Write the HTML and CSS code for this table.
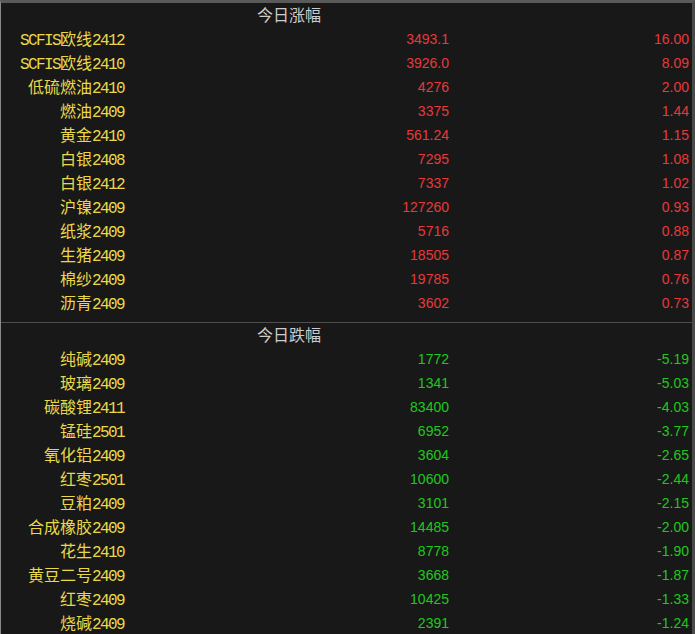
FILE: index.html
```html
<!DOCTYPE html>
<html lang="zh">
<head>
<meta charset="utf-8">
<link rel="stylesheet" href="styles.css">
</head>
<body>
<div class="panel">
  <section class="block up">
    <div class="head">今日涨幅</div>
    <div class="row"><span class="name"><span class="m">SCFIS</span>欧线<span class="m">2412</span></span><span class="price">3493.1</span><span class="chg">16.00</span></div>
    <div class="row"><span class="name"><span class="m">SCFIS</span>欧线<span class="m">2410</span></span><span class="price">3926.0</span><span class="chg">8.09</span></div>
    <div class="row"><span class="name">低硫燃油<span class="m">2410</span></span><span class="price">4276</span><span class="chg">2.00</span></div>
    <div class="row"><span class="name">燃油<span class="m">2409</span></span><span class="price">3375</span><span class="chg">1.44</span></div>
    <div class="row"><span class="name">黄金<span class="m">2410</span></span><span class="price">561.24</span><span class="chg">1.15</span></div>
    <div class="row"><span class="name">白银<span class="m">2408</span></span><span class="price">7295</span><span class="chg">1.08</span></div>
    <div class="row"><span class="name">白银<span class="m">2412</span></span><span class="price">7337</span><span class="chg">1.02</span></div>
    <div class="row"><span class="name">沪镍<span class="m">2409</span></span><span class="price">127260</span><span class="chg">0.93</span></div>
    <div class="row"><span class="name">纸浆<span class="m">2409</span></span><span class="price">5716</span><span class="chg">0.88</span></div>
    <div class="row"><span class="name">生猪<span class="m">2409</span></span><span class="price">18505</span><span class="chg">0.87</span></div>
    <div class="row"><span class="name">棉纱<span class="m">2409</span></span><span class="price">19785</span><span class="chg">0.76</span></div>
    <div class="row"><span class="name">沥青<span class="m">2409</span></span><span class="price">3602</span><span class="chg">0.73</span></div>
  </section>
  <section class="block down">
    <div class="head">今日跌幅</div>
    <div class="row"><span class="name">纯碱<span class="m">2409</span></span><span class="price">1772</span><span class="chg">-5.19</span></div>
    <div class="row"><span class="name">玻璃<span class="m">2409</span></span><span class="price">1341</span><span class="chg">-5.03</span></div>
    <div class="row"><span class="name">碳酸锂<span class="m">2411</span></span><span class="price">83400</span><span class="chg">-4.03</span></div>
    <div class="row"><span class="name">锰硅<span class="m">2501</span></span><span class="price">6952</span><span class="chg">-3.77</span></div>
    <div class="row"><span class="name">氧化铝<span class="m">2409</span></span><span class="price">3604</span><span class="chg">-2.65</span></div>
    <div class="row"><span class="name">红枣<span class="m">2501</span></span><span class="price">10600</span><span class="chg">-2.44</span></div>
    <div class="row"><span class="name">豆粕<span class="m">2409</span></span><span class="price">3101</span><span class="chg">-2.15</span></div>
    <div class="row"><span class="name">合成橡胶<span class="m">2409</span></span><span class="price">14485</span><span class="chg">-2.00</span></div>
    <div class="row"><span class="name">花生<span class="m">2410</span></span><span class="price">8778</span><span class="chg">-1.90</span></div>
    <div class="row"><span class="name">黄豆二号<span class="m">2409</span></span><span class="price">3668</span><span class="chg">-1.87</span></div>
    <div class="row"><span class="name">红枣<span class="m">2409</span></span><span class="price">10425</span><span class="chg">-1.33</span></div>
    <div class="row"><span class="name">烧碱<span class="m">2409</span></span><span class="price">2391</span><span class="chg">-1.24</span></div>
  </section>
</div>
</body>
</html>
```
FILE: styles.css
```css
html, body {
  margin: 0;
  padding: 0;
  background: #181818;
}
.panel {
  width: 695px;
  height: 634px;
  box-sizing: border-box;
  overflow: hidden;
  background: #181818;
  border-top: 3px solid #5a5a5a;
  border-left: 1px solid #8a8a8a;
  border-right: 3px solid #4a4a4a;
}
.block.up {
  padding-bottom: 7px;
  border-bottom: 1px solid #4e4e4e;
}
.head {
  height: 24px;
  padding-left: 256px;
  color: #cccccc;
  font: 16px/22px "Noto Sans CJK SC", sans-serif;
}
.row {
  display: grid;
  grid-template-columns: 123px 325px 240px;
  height: 24px;
}
.name {
  text-align: right;
  color: #ead84a;
  font: 16px/22px "Noto Sans CJK SC", sans-serif;
  white-space: nowrap;
}
.m {
  font-family: "Liberation Mono", monospace;
  letter-spacing: -1.6px;
}
.price, .chg {
  text-align: right;
  font: 14px/24px "Liberation Sans", Arial, sans-serif;
}
.up .price, .up .chg { color: #e8383a; }
.down .price, .down .chg { color: #1ec81e; }
```
